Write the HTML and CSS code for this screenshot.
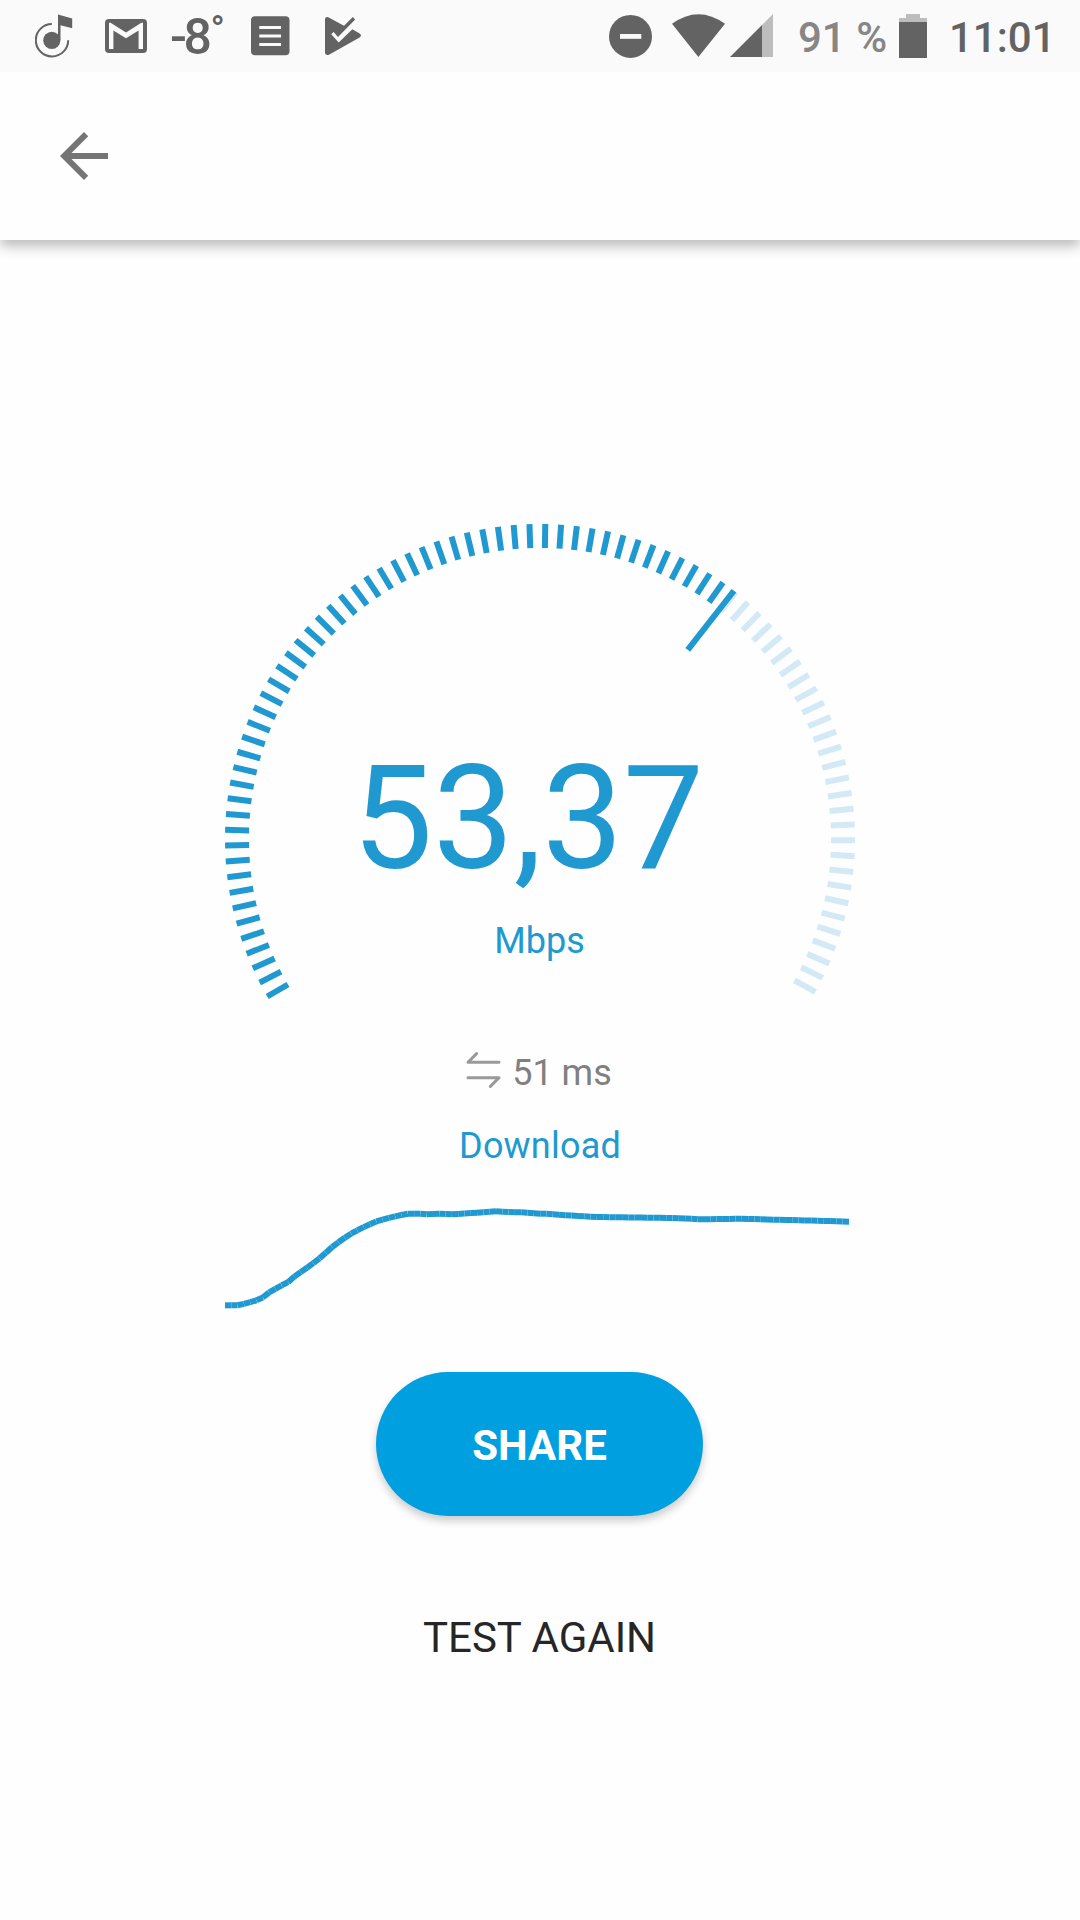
FILE: index.html
```html
<!DOCTYPE html>
<html lang="en">

<head>
    <meta charset="UTF-8">
    <meta name="viewport" content="width=device-width, initial-scale=1.0">
    <title>Speed Test</title>
    <link rel="stylesheet" href="styles.css">
</head>
<body>
    <div class="statusbar">
        <div class="notifications">
            <svg class="icon" width="38" height="72" viewBox="35 0 38 72">
                <path d="M51.8 24A16.2 16.2 0 1 0 68.2 40.2" fill="none" stroke="#636363" stroke-width="2"/>
                <circle cx="51.8" cy="40.3" r="8.6"/>
                <path d="M58 14.5L72.2 18.6V28.2L60.5 25.3V40H58z"/>
            </svg>
            <svg class="icon gmail" width="42" height="72" viewBox="105 0 42 72">
                <rect x="105" y="19" width="42" height="34" rx="4"/>
                <path fill="#fafafa" d="M109 49V22.8h1.6L126 32.6l15.4-9.8h1.6V49h-4.4V30.6L126 38.2l-12.6-7.6V49z"/>
            </svg>
            <div class="temp">-8<span class="degree">°</span></div>
            <svg class="icon doc" width="39" height="72" viewBox="251 0 39 72">
                <rect x="251" y="16.3" width="38.5" height="39" rx="4"/>
                <path d="M259.3 27.5H281M259.3 36H281M259.3 44.5H281" stroke="#fafafa" stroke-width="3"/>
            </svg>
            <svg class="icon play" width="36" height="72" viewBox="325 0 36 72">
                <path d="M325 19Q325.4 16.3 328.3 17.2L344 25.8L352.8 17L355.2 19.6L338 37L333.6 32L331.2 34.3L338.7 42.4L352.4 29.2L360 33.8Q362 35.6 360 37.2L329 54.8Q325.6 55.8 325 53z"/>
            </svg>
        </div>
        <div class="system">
            <svg class="icon" width="43" height="72" viewBox="609 0 43 72">
                <circle cx="630.5" cy="36.4" r="21.5"/>
                <rect x="620" y="34" width="21.3" height="4.8" fill="#fafafa"/>
            </svg>
            <svg class="icon wifi" width="53" height="72" viewBox="672 0 53 72">
                <path d="M672 23.8Q698.4 4.6 725 23.8L698.4 57z"/>
            </svg>
            <svg class="icon signal" width="43" height="72" viewBox="730 0 43 72">
                <path fill="#bdbdbd" d="M762 25L773 14V57H762z"/>
                <path d="M730 57L762 25V57z"/>
            </svg>
            <span class="percent">91 %</span>
            <svg class="icon battery" width="28" height="72" viewBox="899 0 28 72">
                <path fill="#bdbdbd" d="M906 14h14v4h7v4h-28v-4h7z"/>
                <rect x="899" y="22" width="28" height="36"/>
            </svg>
            <span class="clock">11:01</span>
        </div>
    </div>
    <div class="toolbar">
        <svg class="back" width="72" height="72" viewBox="0 0 24 24">
            <path d="M20 11H7.83l5.59-5.59L12 4l-8 8 8 8 1.41-1.41L7.83 13H20v-2z"/>
        </svg>
    </div>
    <div class="main">
        <div class="gauge">
            <svg class="dial" width="630" height="480" viewBox="0 0 630 480"></svg>
            <div class="readout">
                <h1 class="speed">53,37</h1>
                <p class="unit">Mbps</p>
            </div>
        </div>
        <div class="ping">
            <svg class="pingicon" width="35" height="42" viewBox="0 0 35 42">
                <path d="M33 10.3H2L10.6 1.6M2 25.7H33L24.4 34.4"/>
            </svg>
            <span>51 ms</span>
        </div>
        <p class="phase">Download</p>
        <svg class="chart" width="630" height="120" viewBox="0 0 630 120"></svg>
        <button class="share">SHARE</button>
        <button class="again">TEST AGAIN</button>
    </div>

    <script>
        let dial = document.querySelector(".dial")
        let chart = document.querySelector(".chart")

        function addLine(parent, name, x1, y1, x2, y2) {
            let line = document.createElementNS("http://www.w3.org/2000/svg", "line")
            line.setAttribute("class", name)
            line.setAttribute("x1", x1)
            line.setAttribute("y1", y1)
            line.setAttribute("x2", x2)
            line.setAttribute("y2", y2)
            parent.appendChild(line)
        }
        // angle in degrees, clockwise from the right
        function addTick(name, angle, inner, outer) {
            let rad = angle * Math.PI / 180
            let cos = Math.cos(rad)
            let sin = Math.sin(rad)
            addLine(dial, name, 315 + inner * cos, 315 + inner * sin, 315 + outer * cos, 315 + outer * sin)
        }
        let needle = 308
        for (let i = 0; i < 84; i++) {
            let angle = 150 + i * 2.88
            addTick(angle < needle ? "tick" : "tick tick-off", angle, 291, 315)
        }
        addTick("tick", needle, 240, 315)

        let points = [[0, 105.3], [12.3, 105.3], [18.3, 104], [31.7, 100.3], [38.3, 97.3], [44.3, 92.3],
            [56.7, 85.3], [63.3, 82], [70, 76], [81.7, 68], [95, 58], [106.7, 47.3], [118.3, 38.7],
            [128.3, 32.3], [138.3, 27.3], [151.7, 21.3], [168.3, 16.7], [183.3, 13.7], [195.7, 13.7],
            [201.7, 14.3], [214, 13.7], [226.7, 14.3], [258.3, 12.3], [270, 11.3], [283.3, 12],
            [296.7, 12.3], [315, 13.7], [321.7, 13.7], [341.7, 15.3], [371.7, 17], [395, 17.3],
            [445, 18], [466.7, 18.7], [473.3, 19.3], [498.3, 19], [516.7, 18.7], [535, 19.3],
            [591.7, 20.7], [624, 21.7]]
        function valueAt(x) {
            for (let i = 1; i < points.length; i++) {
                if (x <= points[i][0]) {
                    let a = points[i - 1]
                    let b = points[i]
                    return a[1] + (b[1] - a[1]) * (x - a[0]) / (b[0] - a[0])
                }
            }
            return points[points.length - 1][1]
        }
        let step = 624 / 99
        for (let i = 0; i < 99; i++) {
            addLine(chart, "segment", i * step, valueAt(i * step), (i + 1) * step, valueAt((i + 1) * step))
        }
    </script>
</body>
</html>
```
FILE: styles.css
```css
* {
    margin: 0;
    padding: 0;
    box-sizing: border-box;
}
body {
    font-family: Roboto, "Liberation Sans", sans-serif;
    background-color: #fefefe;
}
svg {
    display: block;
    flex-shrink: 0;
}
.statusbar {
    position: relative;
    z-index: 2;
    height: 72px;
    display: flex;
    justify-content: space-between;
    padding: 0 29px 0 35px;
    background-color: #fafafa;
    color: #636363;
    overflow: hidden;
}
.notifications,
.system {
    display: flex;
    height: 72px;
}
.icon {
    fill: #636363;
}
.gmail {
    margin-left: 32px;
}
.temp {
    display: flex;
    width: 55px;
    margin-left: 23px;
    font-size: 50px;
    font-weight: 500;
    line-height: 74px;
    letter-spacing: -3.5px;
}
.degree {
    margin-left: 2px;
    font-size: 37px;
    font-weight: 700;
    line-height: 60px;
}
.doc {
    margin-left: 26px;
}
.play {
    margin-left: 35px;
}
.wifi {
    margin-left: 20px;
}
.signal {
    margin-left: 5px;
}
.percent {
    width: 101px;
    margin-left: 25px;
    font-size: 42px;
    font-weight: 500;
    line-height: 76px;
    color: #868686;
    white-space: nowrap;
}
.clock {
    width: 102px;
    margin-left: 22px;
    font-size: 42px;
    font-weight: 500;
    line-height: 76px;
}
.toolbar {
    position: relative;
    height: 168px;
    display: flex;
    align-items: center;
    padding-left: 48px;
    background-color: #fefefe;
    box-shadow: 0 6px 12px rgba(0, 0, 0, 0.27);
}
.back {
    fill: #757575;
}
.main {
    height: 1680px;
    display: flex;
    flex-direction: column;
    align-items: center;
    padding-top: 284px;
}
.gauge {
    display: grid;
    width: 630px;
    height: 480px;
}
.dial,
.readout {
    grid-area: 1 / 1;
}
.tick {
    stroke: #2099d1;
    stroke-width: 6;
}
.tick-off {
    stroke: #d3eaf6;
}
.readout {
    padding-top: 223px;
    text-align: center;
    color: #2099d1;
}
.speed {
    font-size: 144px;
    font-weight: 400;
    line-height: 144px;
    padding-right: 24px;
}
.unit {
    margin-top: 29px;
    padding-right: 1px;
    font-size: 36px;
    line-height: 42px;
}
.ping {
    display: flex;
    gap: 11px;
    margin-top: 48px;
    padding-right: 2px;
    font-size: 36px;
    line-height: 42px;
    color: #808080;
}
.pingicon {
    fill: none;
    stroke: #999;
    stroke-width: 3;
    stroke-linecap: round;
    stroke-linejoin: round;
}
.phase {
    margin-top: 31px;
    font-size: 36px;
    line-height: 42px;
    letter-spacing: 0.2px;
    color: #2099d1;
}
.chart {
    margin-top: 33px;
}
.segment {
    stroke: #2099d1;
    stroke-width: 6;
}
.share {
    width: 327px;
    height: 144px;
    margin-top: 52px;
    margin-right: 1px;
    padding-top: 2px;
    border: none;
    border-radius: 72px;
    background-color: #009fe0;
    color: white;
    font-family: inherit;
    font-size: 42px;
    font-weight: 700;
    box-shadow: 0 5px 8px rgba(0, 0, 0, 0.2);
}
.again {
    margin-top: 98px;
    margin-right: 1px;
    border: none;
    background: none;
    color: #262626;
    font-family: inherit;
    font-size: 42px;
    line-height: 48px;
}
```
